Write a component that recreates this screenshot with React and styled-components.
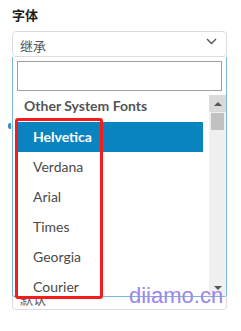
import * as React from "react";
import styled, { createGlobalStyle } from "styled-components";

const GlobalStyle = createGlobalStyle`
  body {
    margin: 0;
    background: #fff;
    font-family: Lato, "Noto Sans", "Noto Sans CJK SC", sans-serif;
  }
`;

const fonts = ["Helvetica", "Verdana", "Arial", "Times", "Georgia", "Courier"];

const Chevron = ({ className }) => (
  <svg className={className} width="11" height="7" viewBox="0 0 11 7">
    <polyline
      points="1,1 5.5,5.5 10,1"
      fill="none"
      stroke="#555"
      strokeWidth="1.4"
    />
  </svg>
);

export default function App() {
  return (
    <StyledPage>
      <GlobalStyle />
      <StyledLabel>字体</StyledLabel>
      <StyledField>
        <StyledSelect>
          <StyledValue>继承</StyledValue>
          <StyledChevron />
        </StyledSelect>

        <StyledDropdown>
          <StyledSearchWrap>
            <StyledSearch />
          </StyledSearchWrap>
          <StyledResults>
            <StyledList>
              <StyledGroupLabel>Other System Fonts</StyledGroupLabel>
              {fonts.map((f, i) => (
                <StyledOption key={f} $active={i === 0}>
                  {f}
                </StyledOption>
              ))}
            </StyledList>
            <StyledScrollbar>
              <StyledArrow $up />
              <StyledThumb />
              <StyledTrack />
              <StyledArrow />
            </StyledScrollbar>
          </StyledResults>
        </StyledDropdown>

        <StyledHighlight />
        <StyledDot />

        <StyledSelect $behind>
          <StyledValue>默认</StyledValue>
          <StyledChevron />
        </StyledSelect>
        <StyledWatermark>diiamo.cn</StyledWatermark>
      </StyledField>
    </StyledPage>
  );
}

const StyledPage = styled.div`
  width: 241px;
  height: 331px;
  box-sizing: border-box;
  padding: 7px 14px 0 12px;
  overflow: hidden;
`;

const StyledLabel = styled.div`
  font-family: "Noto Sans CJK SC", sans-serif;
  font-size: 13px;
  font-weight: 700;
  line-height: 16px;
  color: #1e1e1e;
  margin-bottom: 8px;
`;

const StyledField = styled.div`
  position: relative;
`;

const StyledSelect = styled.div`
  height: 26px;
  box-sizing: border-box;
  border: 1px solid #dcdcde;
  border-radius: 4px;
  display: flex;
  align-items: center;
  justify-content: space-between;
  padding: 0 9px 0 7px;
  margin-top: ${(p) => (p.$behind ? "227px" : "0")};
`;

const StyledValue = styled.span`
  font-family: "Noto Sans CJK SC", sans-serif;
  font-size: 13px;
  color: #555;
  margin-top: 2px;
`;

const StyledChevron = styled(Chevron)`
  margin-top: -6px;
`;

const StyledDropdown = styled.div`
  position: absolute;
  top: 26px;
  left: 0;
  width: 215px;
  height: 240px;
  box-sizing: border-box;
  border: 1px solid #7cb4da;
  border-top: none;
  border-radius: 0 0 3px 3px;
  background: #fff;
  display: flex;
  flex-direction: column;
  z-index: 2;
`;

const StyledSearchWrap = styled.div`
  padding: 4px;
`;

const StyledSearch = styled.div`
  height: 30px;
  box-sizing: border-box;
  border: 1px solid #a0a0a0;
  background: #fff;
`;

const StyledResults = styled.div`
  flex: 1;
  display: flex;
  min-height: 0;
`;

const StyledList = styled.div`
  flex: 1;
  overflow: hidden;
`;

const StyledGroupLabel = styled.div`
  height: 27px;
  box-sizing: border-box;
  padding: 1px 0 0 11px;
  line-height: 20px;
  font-size: 14px;
  font-weight: 700;
  color: #555;
`;

const StyledOption = styled.div`
  height: 30px;
  margin: 0 6px 0 5px;
  padding-left: 15px;
  line-height: 30px;
  font-size: 14px;
  font-weight: ${(p) => (p.$active ? 700 : 400)};
  color: ${(p) => (p.$active ? "#fff" : "#4a4a4a")};
  background: ${(p) => (p.$active ? "#0a84c0" : "transparent")};
`;

const StyledScrollbar = styled.div`
  width: 17px;
  background: #f0f0f0;
  display: flex;
  flex-direction: column;
  align-items: center;
`;

const StyledArrow = styled.div`
  width: 17px;
  height: 17px;
  display: flex;
  align-items: center;
  justify-content: center;
  background: ${(p) => (p.$up ? "#dadada" : "transparent")};
  &::after {
    content: "";
    border-left: 4px solid transparent;
    border-right: 4px solid transparent;
    ${(p) =>
      p.$up
        ? "border-bottom: 4px solid #555;"
        : "border-top: 4px solid #555;"}
  }
`;

const StyledThumb = styled.div`
  width: 13px;
  height: 17px;
  margin-top: 1px;
  background: #c1c1c1;
`;

const StyledTrack = styled.div`
  flex: 1;
`;

const StyledHighlight = styled.div`
  position: absolute;
  top: 87px;
  left: 3px;
  width: 88px;
  height: 181px;
  box-sizing: border-box;
  border: 3px solid #f41c1c;
  border-radius: 3px;
  z-index: 3;
`;

const StyledDot = styled.div`
  position: absolute;
  top: 92px;
  left: -4px;
  width: 3px;
  height: 6px;
  border-radius: 2px 0 0 2px;
  background: #3b8fd0;
`;

const StyledWatermark = styled.div`
  position: absolute;
  top: 252px;
  left: 117px;
  font-family: "Liberation Sans", Arial, sans-serif;
  font-size: 22px;
  line-height: 26px;
  color: #9c86ea;
  z-index: 4;
`;
